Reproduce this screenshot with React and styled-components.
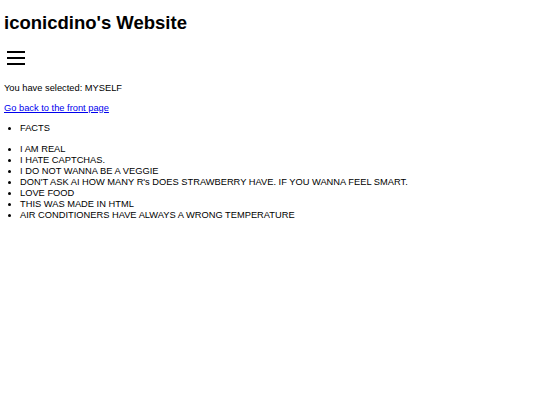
import React from "react";
import styled, { createGlobalStyle } from "styled-components";

const Global = createGlobalStyle`
  html, body { margin: 0; padding: 0; background: #fff; }
  body { font-family: "Liberation Sans", Arial, sans-serif; color: #000; }
`;

const Page = styled.div`
  padding: 0 4px;
  font-size: 9.3px;
  line-height: 11px;
  display: flow-root;
`;

const Title = styled.h1`
  margin: 12px 0;
  font-size: 18.5px;
  line-height: 21px;
  font-weight: bold;
`;

const Menu = styled.div`
  width: 18px;
  padding: 2px 0 4.5px 3px;
`;

const Bar = styled.div`
  height: 2px;
  width: 18px;
  margin: 4px 0;
  background: #000;
`;

const Para = styled.p`
  margin: 9px 0;
`;

const Link = styled.a`
  color: #0000ee;
  text-decoration: underline;
`;

const List = styled.ul`
  margin: ${(p) => p.$m || "9px"} 0;
  padding-left: 16px;
  list-style: disc;
`;

const facts = [
  "I AM REAL",
  "I HATE CAPTCHAS.",
  "I DO NOT WANNA BE A VEGGIE",
  "DON'T ASK AI HOW MANY R's DOES STRAWBERRY HAVE. IF YOU WANNA FEEL SMART.",
  "LOVE FOOD",
  "THIS WAS MADE IN HTML",
  "AIR CONDITIONERS HAVE ALWAYS A WRONG TEMPERATURE",
];

export default function App() {
  return (
    <Page>
      <Global />
      <Title>iconicdino's Website</Title>
      <Menu aria-label="menu">
        <Bar />
        <Bar />
        <Bar />
      </Menu>
      <Para>You have selected: MYSELF</Para>
      <Para>
        <Link href="#">Go back to the front page</Link>
      </Para>
      <List>
        <li>FACTS</li>
      </List>
      <List $m="10px">
        {facts.map((f) => (
          <li key={f}>{f}</li>
        ))}
      </List>
    </Page>
  );
}
